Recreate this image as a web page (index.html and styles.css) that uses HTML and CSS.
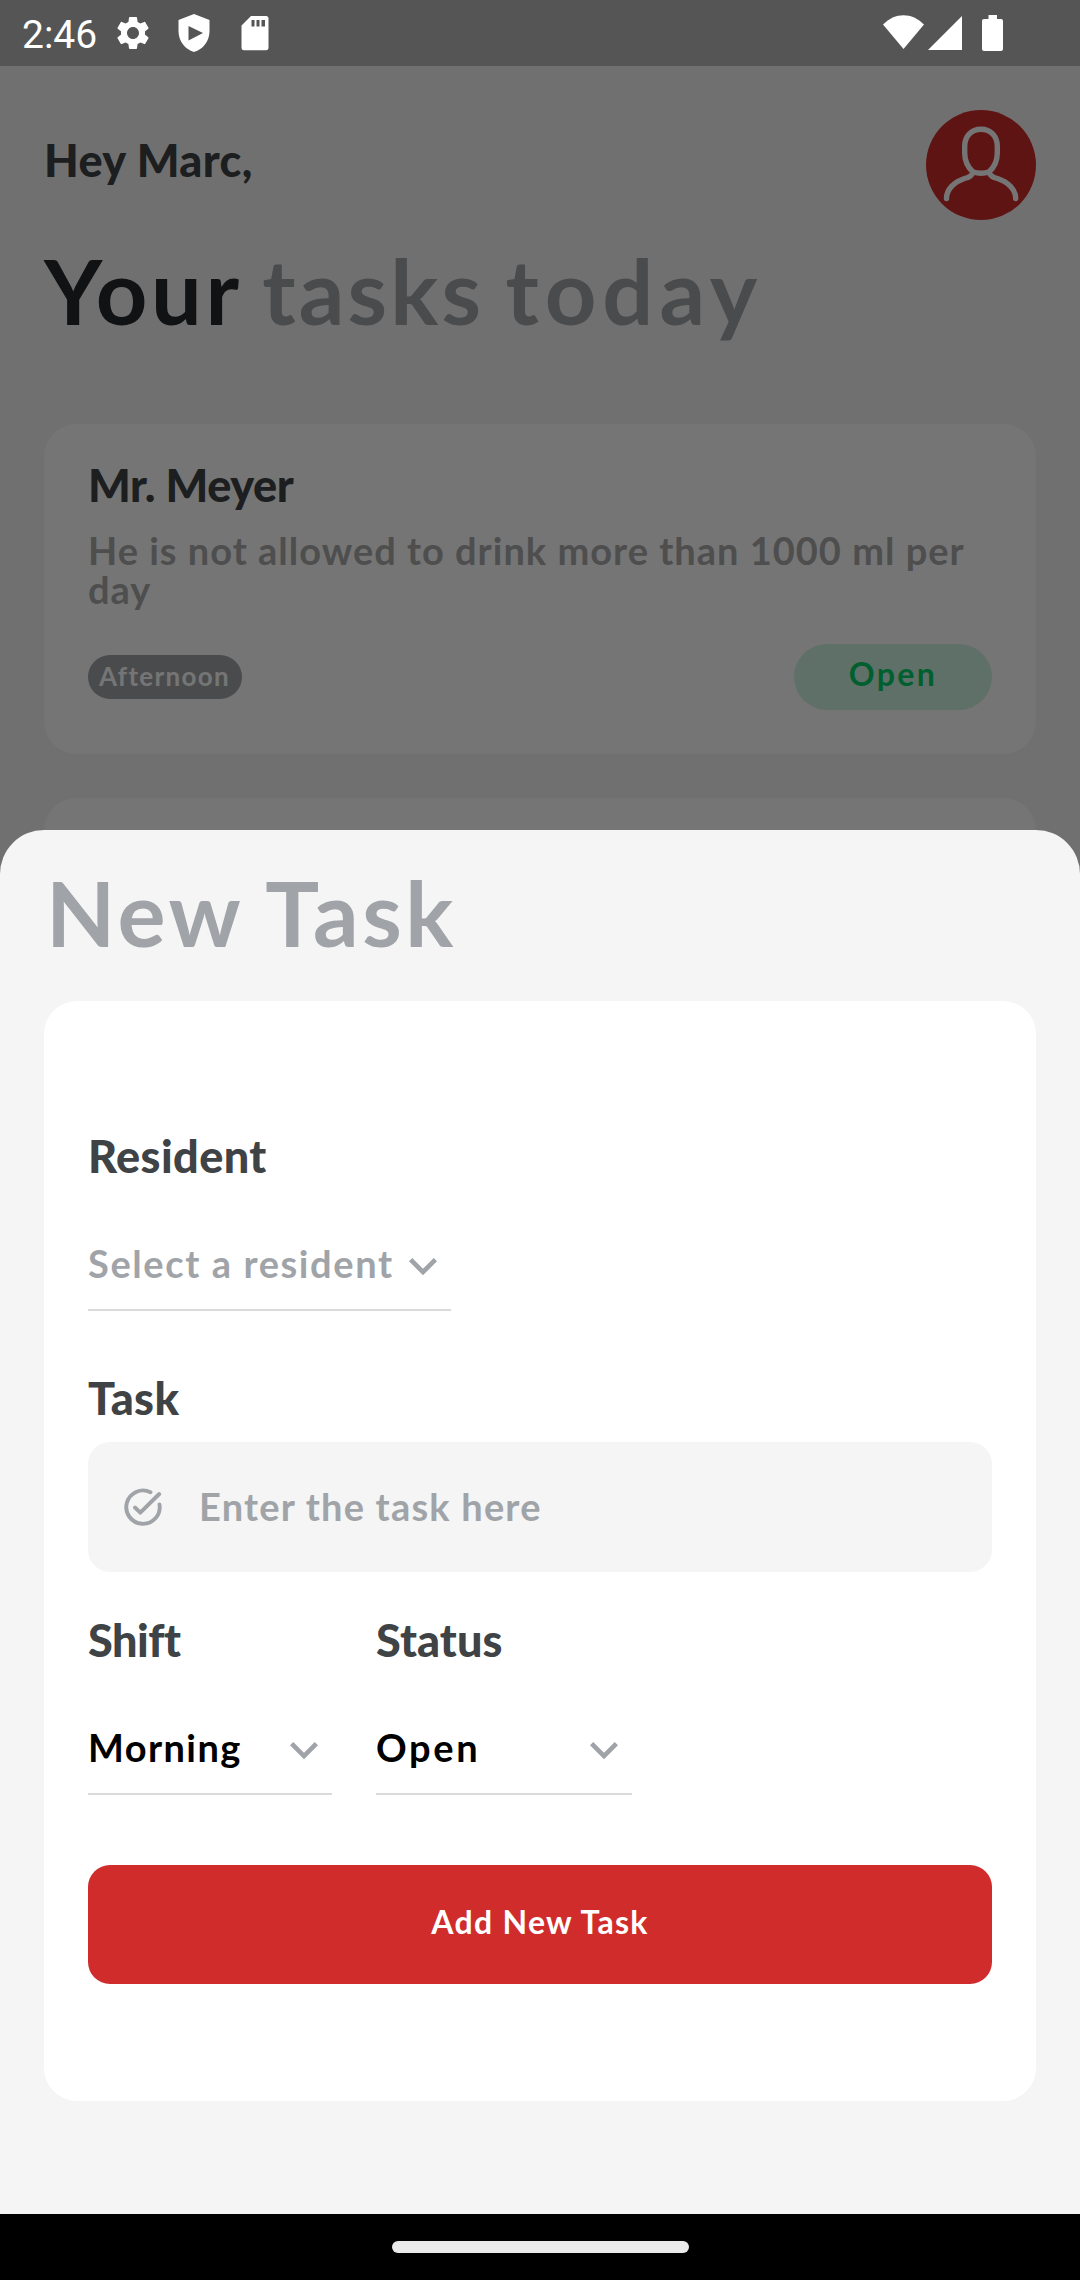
FILE: index.html
```html
<!DOCTYPE html>
<html lang="en">
<head>
<meta charset="utf-8">
<title>New Task</title>
<link rel="stylesheet" href="styles.css">
</head>
<body>
<div class="phone">
  <header class="status-bar">
    <span class="clock">2:46</span>
    <svg class="sys-icon" viewBox="-1.2 -1.2 26.4 26.4" fill="#fff"><path d="M19.14 12.94c.04-.3.06-.61.06-.94 0-.32-.02-.64-.07-.94l2.03-1.58c.18-.14.23-.41.12-.61l-1.92-3.32c-.12-.22-.37-.29-.59-.22l-2.39.96c-.5-.38-1.03-.7-1.62-.94L14.4 2.81c-.04-.24-.24-.41-.48-.41h-3.84c-.24 0-.43.17-.47.41L9.25 5.35c-.59.24-1.13.57-1.62.94l-2.39-.96c-.22-.08-.47 0-.59.22L2.74 8.87c-.12.21-.08.47.12.61l2.03 1.58c-.05.3-.09.63-.09.94s.02.64.07.94l-2.03 1.58c-.18.14-.23.41-.12.61l1.92 3.32c.12.22.37.29.59.22l2.39-.96c.5.38 1.03.7 1.62.94l.36 2.54c.05.24.24.41.48.41h3.84c.24 0 .44-.17.47-.41l.36-2.54c.59-.24 1.13-.56 1.62-.94l2.39.96c.22.08.47 0 .59-.22l1.92-3.32c.12-.22.07-.47-.12-.61l-2.01-1.58zM12 15.6c-1.98 0-3.6-1.62-3.6-3.6s1.62-3.6 3.6-3.6 3.6 1.62 3.6 3.6-1.62 3.6-3.6 3.6z"/></svg>
    <svg class="sys-icon" viewBox="0 0 44 44" fill="#fff" fill-rule="evenodd"><path d="M22 3L6.500 9V20C6.500 30 13 38.500 22 41C31 38.500 37.500 30 37.500 20V9ZM16.500 15L31 22L16.500 29.500Z"/></svg>
    <svg class="sys-icon" viewBox="0 0 44 44" fill="#fff" fill-rule="evenodd"><path d="M18 5H33Q35.500 5 35.500 7.500V37Q35.500 39.300 33 39.300H11Q8.500 39.300 8.500 37V14.500ZM18.500 9V15.500H21.500V9ZM23.500 9V15.500H26.500V9ZM28.500 9V15.500H32V9Z"/></svg>
    <span class="spacer"></span>
    <svg class="wifi" viewBox="0 0 41 34" fill="#fff"><path d="M0 9.500C12 -3 29 -3 41 9.500L20.500 34Z"/></svg>
    <svg class="cell" viewBox="0 0 34 34" fill="#fff"><path d="M34 0V34H0Z"/></svg>
    <svg class="battery" viewBox="0 0 21 36" fill="#fff"><path d="M6.500 0H15V4H19Q21 4 21 6V34Q21 36 19 36H2Q0 36 0 34V6Q0 4 2 4H6.500Z"/></svg>
  </header>

  <main class="screen">
    <div class="greeting-row">
      <p class="heading greeting">Hey Marc,</p>
      <svg class="avatar" viewBox="0 0 110 110">
        <circle cx="55" cy="55" r="55" fill="#d02c2c"/>
        <g fill="none" stroke="#fff" stroke-width="5.4" stroke-linecap="round">
          <path d="M55 19.300C45 19.300 38.700 26.500 38.700 36V43C38.700 51 42 57.500 47 62Q55 64.500 63 62C68 57.500 71.300 51 71.300 43V36C71.300 26.500 65 19.300 55 19.300Z"/>
          <path d="M47 62C46 66.500 42.500 67.500 38.500 68.500C28 72 20.500 79.500 20.500 88.500M63 62C64 66.500 67.500 67.500 71.500 68.500C82 72 89.700 79.500 89.700 88.500"/>
        </g>
      </svg>
    </div>
    <h1 class="title main-title"><span class="strong">Your</span> <span class="tasks">tasks</span> <span class="today">today</span></h1>

    <article class="task-card">
      <h2 class="heading resident">Mr. Meyer</h2>
      <p class="note">He is not allowed to drink more than 1000 ml per day</p>
      <div class="tags">
        <span class="shift-tag">Afternoon</span>
        <span class="status-tag">Open</span>
      </div>
    </article>
    <article class="task-card"></article>
    <div class="scrim"></div>
  </main>

  <section class="sheet">
    <h1 class="title sheet-title">New Task</h1>
    <form class="form-card">
      <label class="heading">Resident</label>
      <div class="select select-resident">
        <span class="placeholder">Select a resident</span>
        <svg class="chevron" viewBox="0 0 24 24"><path d="M7.410 8.590L12 13.170L16.590 8.590L18 10L12 16L6 10Z"/></svg>
      </div>
      <label class="heading task-label">Task</label>
      <div class="input">
        <svg class="check" viewBox="0 0 40 40"><path d="M27.500 5.200A16.700 16.700 0 1 0 36.500 17.500M12 20.500L17.300 25.700L36.200 7"/></svg>
        <span>Enter the task here</span>
      </div>
      <div class="pair">
        <div class="shift">
          <label class="heading">Shift</label>
          <div class="select">
            <span class="morning">Morning</span>
            <svg class="chevron" viewBox="0 0 24 24"><path d="M7.410 8.590L12 13.170L16.590 8.590L18 10L12 16L6 10Z"/></svg>
          </div>
        </div>
        <div class="status">
          <label class="heading">Status</label>
          <div class="select">
            <span class="open">Open</span>
            <svg class="chevron" viewBox="0 0 24 24"><path d="M7.410 8.590L12 13.170L16.590 8.590L18 10L12 16L6 10Z"/></svg>
          </div>
        </div>
      </div>
      <button class="submit" type="button">Add New Task</button>
    </form>
  </section>

  <footer class="nav-bar"><span class="handle"></span></footer>
</div>
</body>
</html>
```
FILE: styles.css
```css
* { box-sizing: border-box; margin: 0; padding: 0; }

body { font-family: "Lato", sans-serif; font-weight: 700; background: #000; }

.phone {
  position: relative;
  display: flex;
  flex-direction: column;
  width: 1080px;
  height: 2280px;
  overflow: hidden;
}

svg { display: block; flex: none; }

/* System status bar */
.status-bar {
  display: flex;
  align-items: center;
  flex: none;
  height: 66px;
  padding: 0 77px 0 22px;
  background: #555;
}
.clock {
  width: 89px;
  font: 400 39px/66px "Roboto", sans-serif;
  padding-top: 3px;
  color: #fff;
}
.sys-icon { width: 44px; height: 44px; margin-right: 17px; }
.spacer { flex: 1; }
.wifi { width: 41px; height: 34px; margin-right: 4px; margin-bottom: 2px; }
.cell { width: 34px; height: 34px; margin-right: 20px; }
.battery { width: 21px; height: 36px; }

/* Task list behind the sheet */
.screen {
  position: relative;
  flex: 1;
  overflow: hidden;
  padding: 44px 44px 0;
  background: #f5f5f5;
}
.scrim { position: absolute; inset: 0; background: rgba(0, 0, 0, .54); }

.heading {
  display: block;
  font-size: 45px;
  font-weight: 900;
  line-height: 54px;
  letter-spacing: .4px;
  color: #404345;
}
.greeting-row { display: flex; align-items: center; justify-content: space-between; }
.greeting { padding-bottom: 10px; }
.avatar { width: 110px; height: 110px; }

.title {
  font-size: 90px;
  font-weight: 700;
  line-height: 108px;
  letter-spacing: 3.6px;
  color: #a0a4a8;
}
.main-title { margin-top: 16px; word-spacing: -4px; }
.strong { color: #25282b; }
.tasks { letter-spacing: 3.1px; }
.today { letter-spacing: 6px; }

.task-card {
  height: 330px;
  margin-bottom: 44px;
  padding: 34px 44px 0;
  border-radius: 33px;
  background: #fff;
}
.title + .task-card { margin-top: 80px; }
.resident { letter-spacing: -.4px; }
.note {
  margin-top: 19px;
  font-size: 38px;
  line-height: 39px;
  letter-spacing: 1px;
  color: #ababab;
}
.tags { display: flex; align-items: center; justify-content: space-between; margin-top: 35px; }
.shift-tag {
  width: 154px;
  height: 44px;
  border-radius: 22px;
  background: #a0a4a8;
  color: #fff;
  font-size: 26px;
  line-height: 42px;
  letter-spacing: 1.3px;
  padding-left: 11px;
}
.status-tag {
  width: 198px;
  height: 66px;
  border-radius: 33px;
  background: #cff3e2;
  color: #00d066;
  font-size: 32px;
  line-height: 60px;
  letter-spacing: 2.4px;
  text-align: center;
}

/* Bottom sheet */
.sheet {
  position: absolute;
  left: 0;
  right: 0;
  top: 830px;
  bottom: 66px;
  padding: 28px 44px 0;
  border-radius: 44px 44px 0 0;
  background: #f5f5f5;
}
.sheet-title { margin: 0 0 35px 2px; }
.form-card {
  height: 1100px;
  padding: 128px 44px 0;
  border-radius: 33px;
  background: #fff;
}
.select {
  display: flex;
  align-items: center;
  justify-content: space-between;
  height: 72px;
  margin-top: 56px;
  padding-bottom: 24px;
  border-bottom: 2px solid #dadada;
  font-size: 38px;
  line-height: 46px;
  color: #000;
}
.select span { padding-top: 2px; white-space: nowrap; }
.select-resident { width: 363px; }
.placeholder { color: #a0a4a8; letter-spacing: 1.6px; }
.morning { letter-spacing: 1.4px; }
.open { letter-spacing: 2.7px; }
.chevron { width: 56px; height: 56px; margin: 3px 0 -5px; fill: #a0a4a8; }

.task-label { margin-top: 60px; }
.input {
  display: flex;
  align-items: center;
  height: 130px;
  margin-top: 17px;
  padding-left: 35px;
  border-radius: 22px;
  background: #f5f5f5;
  color: #a0a4a8;
  font-size: 38px;
  letter-spacing: 1.2px;
}
.input span { padding-bottom: 2px; }
.check {
  width: 40px;
  height: 40px;
  margin-right: 36px;
  fill: none;
  stroke: #a0a4a8;
  stroke-width: 3.9;
  stroke-linecap: round;
  stroke-linejoin: round;
}
.pair { display: flex; gap: 44px; margin-top: 41px; }
.shift { width: 244px; }
.shift .heading { letter-spacing: -.5px; }
.status { width: 256px; }
.status .heading { letter-spacing: .1px; }

.submit {
  display: block;
  width: 100%;
  height: 119px;
  margin-top: 70px;
  padding-bottom: 6px;
  border: 0;
  border-radius: 22px;
  background: #d02c2c;
  color: #fff;
  font: 700 32px "Lato", sans-serif;
  letter-spacing: 1.3px;
}

/* Gesture navigation */
.nav-bar {
  display: flex;
  align-items: center;
  justify-content: center;
  flex: none;
  height: 66px;
  background: #000;
}
.handle { width: 297px; height: 12px; border-radius: 6px; background: #ebebeb; }
```
